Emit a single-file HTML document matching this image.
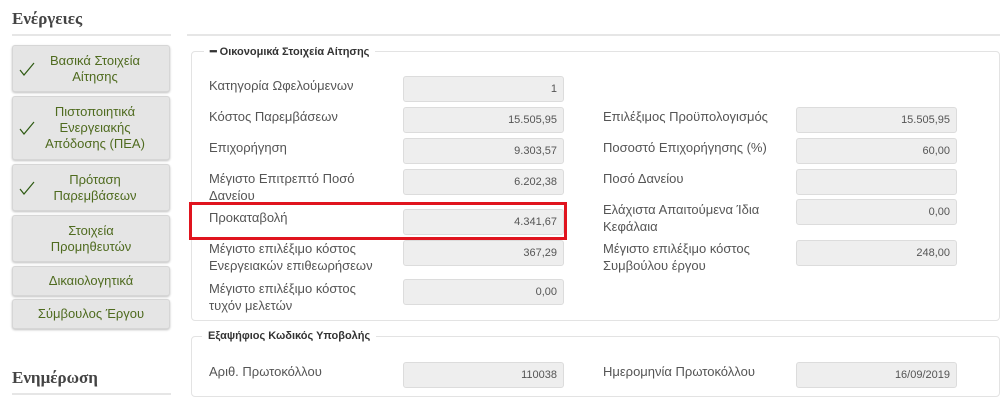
<!DOCTYPE html>
<html><head><meta charset="utf-8"><style>
*{box-sizing:border-box;margin:0;padding:0}
body{width:1000px;height:403px;background:#fff;position:relative;overflow:hidden;font-family:"Liberation Sans",sans-serif;color:#555}
.a{position:absolute}
.h{font-family:"Liberation Serif",serif;font-weight:bold;font-size:17px;color:#444}
.line{height:2px;background:#e6e6e6}
.btn{position:absolute;left:12px;width:158px;background:#e5e5e5;border:1px solid #d6d6d6;border-radius:3px;box-shadow:0 1px 2px rgba(0,0,0,.25);color:#4f6b1f;font-size:13px;line-height:16px;text-align:center;display:flex;align-items:center;justify-content:center}
.btn.c{padding-left:8px}
.chk{position:absolute;left:6px;top:50%;margin-top:-8px}
.fs{position:absolute;border:1px solid #e3e3e3;border-radius:4px}
.lg{position:absolute;background:#fff;font-size:11px;font-weight:bold;color:#333;padding:0 6px}
.lb{position:absolute;font-size:13px;line-height:17px;color:#555}
.in{position:absolute;width:161px;height:26px;background:#eee;border:1px solid #dcdcdc;border-radius:3px;font-size:11px;color:#555;text-align:right;padding-right:6px;line-height:25px}
</style></head><body>
<div class="a h" style="left:12px;top:9px">Ενέργειες</div>
<div class="a line" style="left:12px;top:34px;width:159px"></div>
<div class="a line" style="left:187px;top:34px;width:813px"></div>

<div class="btn c" style="top:45px;height:47px"><svg class="chk" width="16" height="16" viewBox="0 0 16 16"><path d="M1 9 L5 14 L15 2" fill="none" stroke="#2e5a12" stroke-width="1.2"/></svg>Βασικά Στοιχεία<br>Αίτησης</div>
<div class="btn c" style="top:96px;height:64px"><svg class="chk" width="16" height="16" viewBox="0 0 16 16"><path d="M1 9 L5 14 L15 2" fill="none" stroke="#2e5a12" stroke-width="1.2"/></svg>Πιστοποιητικά<br>Ενεργειακής<br>Απόδοσης (ΠΕΑ)</div>
<div class="btn c" style="top:164px;height:47px"><svg class="chk" width="16" height="16" viewBox="0 0 16 16"><path d="M1 9 L5 14 L15 2" fill="none" stroke="#2e5a12" stroke-width="1.2"/></svg>Πρόταση<br>Παρεμβάσεων</div>
<div class="btn" style="top:215px;height:47px">Στοιχεία<br>Προμηθευτών</div>
<div class="btn" style="top:266px;height:30px">Δικαιολογητικά</div>
<div class="btn" style="top:299px;height:30px">Σύμβουλος Έργου</div>

<div class="a h" style="left:12px;top:368px">Ενημέρωση</div>
<div class="a line" style="left:12px;top:393px;width:159px"></div>

<div class="fs" style="left:191px;top:51px;width:809px;height:270px"></div>
<div class="lg" style="left:204px;top:45px">━ Οικονομικά Στοιχεία Αίτησης</div>

<div class="lb" style="left:209px;top:77px">Κατηγορία Ωφελούμενων</div>
<div class="in" style="left:403px;top:76px">1</div>
<div class="lb" style="left:209px;top:108px">Κόστος Παρεμβάσεων</div>
<div class="in" style="left:403px;top:107px">15.505,95</div>
<div class="lb" style="left:209px;top:139px">Επιχορήγηση</div>
<div class="in" style="left:403px;top:138px">9.303,57</div>
<div class="lb" style="left:209px;top:170px">Μέγιστο Επιτρεπτό Ποσό<br>Δανείου</div>
<div class="in" style="left:403px;top:169px">6.202,38</div>
<div class="lb" style="left:209px;top:209px">Προκαταβολή</div>
<div class="in" style="left:403px;top:209px">4.341,67</div>
<div class="a" style="left:189px;top:202px;width:378px;height:38px;border:3px solid #e0141e"></div>
<div class="lb" style="left:209px;top:240px">Μέγιστο επιλέξιμο κόστος<br>Ενεργειακών επιθεωρήσεων</div>
<div class="in" style="left:403px;top:240px">367,29</div>
<div class="lb" style="left:209px;top:280px">Μέγιστο επιλέξιμο κόστος<br>τυχόν μελετών</div>
<div class="in" style="left:403px;top:279px">0,00</div>

<div class="lb" style="left:603px;top:108px">Επιλέξιμος Προϋπολογισμός</div>
<div class="in" style="left:796px;top:107px">15.505,95</div>
<div class="lb" style="left:603px;top:139px">Ποσοστό Επιχορήγησης (%)</div>
<div class="in" style="left:796px;top:138px">60,00</div>
<div class="lb" style="left:603px;top:170px">Ποσό Δανείου</div>
<div class="in" style="left:796px;top:169px"></div>
<div class="lb" style="left:603px;top:201px">Ελάχιστα Απαιτούμενα Ίδια<br>Κεφάλαια</div>
<div class="in" style="left:796px;top:199px">0,00</div>
<div class="lb" style="left:603px;top:240px">Μέγιστο επιλέξιμο κόστος<br>Συμβούλου έργου</div>
<div class="in" style="left:796px;top:240px">248,00</div>

<div class="fs" style="left:191px;top:336px;width:809px;height:61px"></div>
<div class="lg" style="left:202px;top:330px">Εξαψήφιος Κωδικός Υποβολής</div>
<div class="lb" style="left:209px;top:363px">Αριθ. Πρωτοκόλλου</div>
<div class="in" style="left:403px;top:362px">110038</div>
<div class="lb" style="left:603px;top:363px">Ημερομηνία Πρωτοκόλλου</div>
<div class="in" style="left:796px;top:362px">16/09/2019</div>
</body></html>
